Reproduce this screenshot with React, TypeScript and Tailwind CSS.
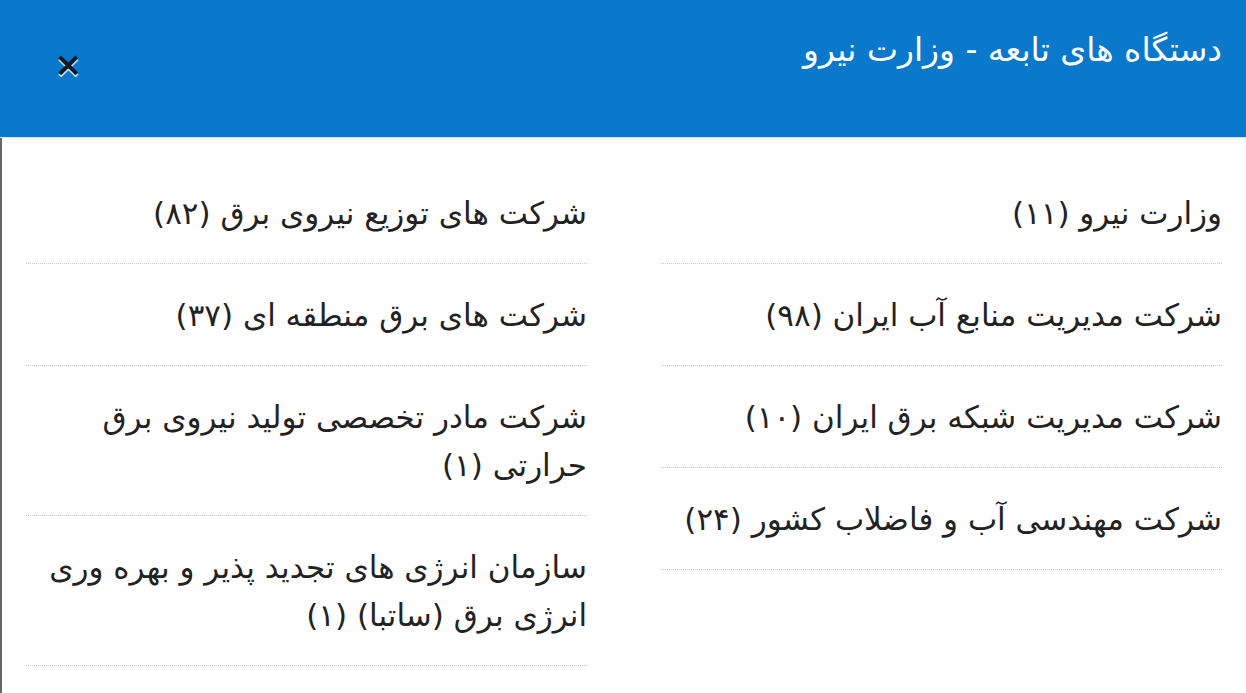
import React from "react";

const right: string[][] = [
  ["وزارت نیرو (۱۱)"],
  ["شرکت مدیریت منابع آب ایران (۹۸)"],
  ["شرکت مدیریت شبکه برق ایران (۱۰)"],
  ["شرکت مهندسی آب و فاضلاب کشور (۲۴)"],
];
const left: string[][] = [
  ["شرکت های توزیع نیروی برق (۸۲)"],
  ["شرکت های برق منطقه ای (۳۷)"],
  ["شرکت مادر تخصصی تولید نیروی برق", "حرارتی (۱)"],
  ["سازمان انرژی های تجدید پذیر و بهره وری", "انرژی برق (ساتبا) (۱)"],
];

function Col({ items }: { items: string[][] }) {
  return (
    <ul className="flex flex-col">
      {items.map((lines) => (
        <li
          key={lines.join(" ")}
          className="border-b border-dotted border-[#c8c8c8] pt-[27px] pb-[26px] text-[31px] leading-[48px] text-[#222]"
        >
          {lines.map((l) => (
            <span key={l} className="block whitespace-nowrap">
              {l}
            </span>
          ))}
        </li>
      ))}
    </ul>
  );
}

export default function App() {
  return (
    <div
      dir="rtl"
      className="w-[1246px] h-[693px] bg-white overflow-hidden"
      style={{ fontFamily: '"DejaVu Sans", sans-serif' }}
    >
      <div className="h-[138px] bg-[#0a78cb] flex items-start justify-between px-6 pt-[25px] border-b border-[#d6e6f5]">
        <h1 className="text-white text-[33px] leading-[50px] font-normal">
          دستگاه های تابعه - وزارت نیرو
        </h1>
        <button className="ml-[30px] mt-[22px] text-[34px] font-bold leading-none text-[#0d1b2a] [text-shadow:0_2px_0_#cfe6fa]">
          ×
        </button>
      </div>
      <div className="h-[555px] border-l-2 border-[#666] px-6 pt-[24px] grid grid-cols-2 gap-x-[74px] items-start">
        <Col items={right} />
        <Col items={left} />
      </div>
    </div>
  );
}
